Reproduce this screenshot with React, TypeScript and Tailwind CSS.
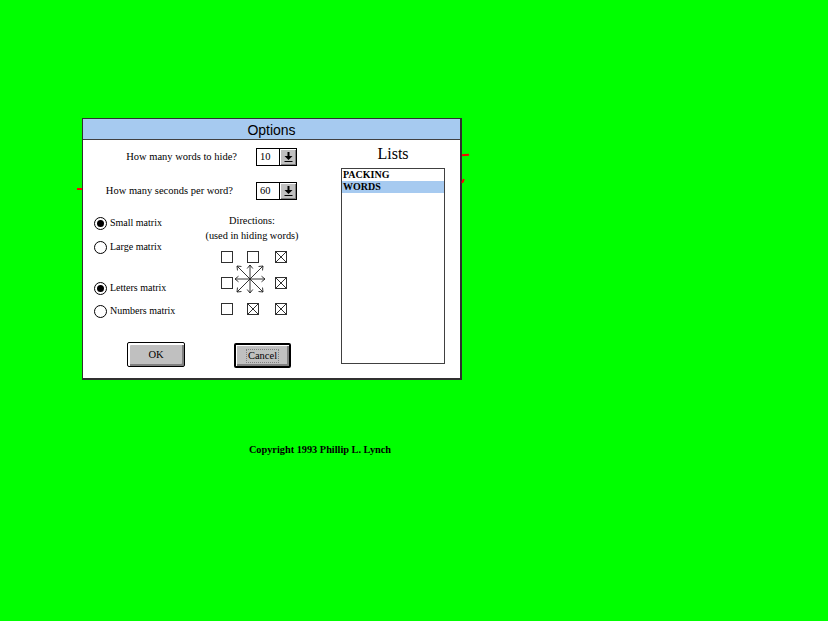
import React from "react";

const serif = { fontFamily: '"Liberation Serif", "Times New Roman", serif' };
const sans = { fontFamily: '"Liberation Sans", Arial, sans-serif' };

const DropArrow = () => (
  <svg width="9" height="10" viewBox="0 0 9 10" className="block">
    <rect x="3.5" y="0" width="2" height="4" fill="#000" />
    <polygon points="0.5,4 8.5,4 4.5,8" fill="#000" />
    <rect x="0.5" y="9" width="8" height="1" fill="#000" />
  </svg>
);

const Dropdown = ({ value }: { value: string }) => (
  <div className="flex h-[18px] w-[41px] border border-black bg-white">
    <div className="flex flex-1 items-center pl-[3px] text-[10.5px] leading-none" style={serif}>
      {value}
    </div>
    <div className="flex w-[17px] items-center justify-center border-l border-black bg-[#c0c0c0] shadow-[inset_1px_1px_0_#fff,inset_-1px_-1px_0_#808080]">
      <DropArrow />
    </div>
  </div>
);

const Radio = ({ label, checked }: { label: string; checked?: boolean }) => (
  <div className="flex h-[16px] items-center">
    <div className="flex h-[13px] w-[13px] items-center justify-center rounded-full border border-black bg-white">
      {checked ? <div className="h-[7px] w-[7px] rounded-full bg-black" /> : null}
    </div>
    <span className="ml-[3px] text-[10px] leading-none" style={serif}>
      {label}
    </span>
  </div>
);

const Check = ({ checked }: { checked?: boolean }) => (
  <div className="h-[12px] w-[12px] border border-[#303030] bg-white">
    {checked ? (
      <svg width="10" height="10" viewBox="0 0 10 10" className="block">
        <line x1="0" y1="0" x2="10" y2="10" stroke="#303030" strokeWidth="1" />
        <line x1="10" y1="0" x2="0" y2="10" stroke="#303030" strokeWidth="1" />
      </svg>
    ) : null}
  </div>
);

const Compass = () => {
  const c = 15;
  const arms = [
    [0, -14],
    [0, 14],
    [-15, 0],
    [15, 0],
    [-13, -13],
    [13, -13],
    [-13, 13],
    [13, 13],
  ];
  return (
    <svg width="30" height="30" viewBox="0 0 30 30" className="relative -top-[13px] -left-[12px] block overflow-visible">
      {arms.map(([dx, dy], i) => {
        const len = Math.hypot(dx, dy);
        const ux = dx / len;
        const uy = dy / len;
        const ex = c + dx;
        const ey = c + dy;
        const h = 3.5;
        const a1x = ex - h * (ux - uy * 0.8);
        const a1y = ey - h * (uy + ux * 0.8);
        const a2x = ex - h * (ux + uy * 0.8);
        const a2y = ey - h * (uy - ux * 0.8);
        return (
          <g key={i} stroke="#202020" strokeWidth="0.9" fill="none">
            <line x1={c} y1={c} x2={ex} y2={ey} />
            <polyline points={`${a1x},${a1y} ${ex},${ey} ${a2x},${a2y}`} />
          </g>
        );
      })}
    </svg>
  );
};

const Button = ({ label, isDefault }: { label: string; isDefault?: boolean }) => (
  <div
    className={
      isDefault
        ? "flex h-[25px] w-[57px] items-center justify-center rounded-[2px] border-2 border-black bg-[#c0c0c0] shadow-[inset_1px_1px_0_#fff,inset_-2px_-2px_0_#808080]"
        : "flex h-[25px] w-[58px] items-center justify-center rounded-[2px] border border-black bg-[#c0c0c0] shadow-[inset_1px_1px_0_#fff,inset_2px_2px_0_#fff,inset_-2px_-2px_0_#808080]"
    }>
    <span
      className={
        isDefault
          ? "border border-dotted border-[#808080] px-[1px] text-[10.5px] leading-[12px]"
          : "text-[10.5px] leading-[12px]"
      }
      style={serif}>
      {label}
    </span>
  </div>
);

const App = () => {
  const checks = [false, false, true, false, null, true, false, true, true];
  return (
    <div className="relative h-[621px] w-[828px] overflow-hidden bg-[#00ff00] text-black">
      {/* stray red marks on the canvas */}
      <div className="absolute left-[77px] top-[188px] h-[2px] w-[5px] bg-[#ff0000]" />
      <div className="absolute left-[462px] top-[154px] h-[2px] w-[7px] -rotate-6 bg-[#ff0000]" />
      <div className="absolute left-[462px] top-[179px] h-[4px] w-[2px] rotate-[25deg] bg-[#ff0000]" />

      <div className="ml-[82px] pt-[118px]">
        <div className="h-[262px] w-[380px] border border-r-2 border-b-2 border-[#303030] bg-white">
          <div
            className="flex h-[21px] items-center justify-center border-b border-[#404040] bg-[#a6caf0] pt-[2px] text-[14px] leading-none"
            style={sans}>
            Options
          </div>

          <div className="flex">
            <div className="w-[250px]">
              <div className="mt-[8px] flex h-[18px] items-center">
                <div className="w-[154px] text-right text-[10.5px] leading-none" style={serif}>
                  How many words to hide?
                </div>
                <div className="ml-[19px]">
                  <Dropdown value="10" />
                </div>
              </div>
              <div className="mt-[16px] flex h-[18px] items-center">
                <div className="w-[150px] text-right text-[10.5px] leading-none" style={serif}>
                  How many seconds per word?
                </div>
                <div className="ml-[23px]">
                  <Dropdown value="60" />
                </div>
              </div>

              <div className="flex">
                <div className="w-[118px] pl-[11px]">
                  <div className="mt-[15px]">
                    <Radio label="Small matrix" checked />
                  </div>
                  <div className="mt-[8px]">
                    <Radio label="Large matrix" />
                  </div>
                  <div className="mt-[25px]">
                    <Radio label="Letters matrix" checked />
                  </div>
                  <div className="mt-[7px]">
                    <Radio label="Numbers matrix" />
                  </div>
                </div>
                <div className="w-[102px]">
                  <div className="mt-[13px] text-center text-[10.3px] leading-[15px]" style={serif}>
                    <div>Directions:</div>
                    <div>(used in hiding words)</div>
                  </div>
                  <div className="mt-[8px] ml-[20px] grid grid-cols-[26px_28px_12px] grid-rows-[26px_26px_12px]">
                    {checks.map((c, i) =>
                      c === null ? (
                        <div key={i} className="h-[12px] w-[12px]">
                          <Compass />
                        </div>
                      ) : (
                        <Check key={i} checked={c} />
                      )
                    )}
                  </div>
                </div>
              </div>

              <div className="mt-[23px] flex items-start">
                <div className="ml-[44px]">
                  <Button label="OK" />
                </div>
                <div className="ml-[49px] mt-[1px]">
                  <Button label="Cancel" isDefault />
                </div>
              </div>
            </div>

            <div className="pl-[8px]">
              <div className="mt-[5px] w-[104px] text-center text-[16px] leading-[18px]" style={serif}>
                Lists
              </div>
              <div className="mt-[5px] h-[196px] w-[104px] border border-[#404040] bg-white">
                <div className="h-[12px] pl-[1px] text-[10px] font-bold leading-[12px]" style={serif}>
                  PACKING
                </div>
                <div className="h-[12px] bg-[#a6caf0] pl-[1px] text-[10px] font-bold leading-[12px]" style={serif}>
                  WORDS
                </div>
              </div>
            </div>
          </div>
        </div>
      </div>

      <div className="mt-[63px] w-[640px] text-center text-[10.3px] font-bold leading-[14px]" style={serif}>
        Copyright 1993 Phillip L. Lynch
      </div>
    </div>
  );
};

export default App;
